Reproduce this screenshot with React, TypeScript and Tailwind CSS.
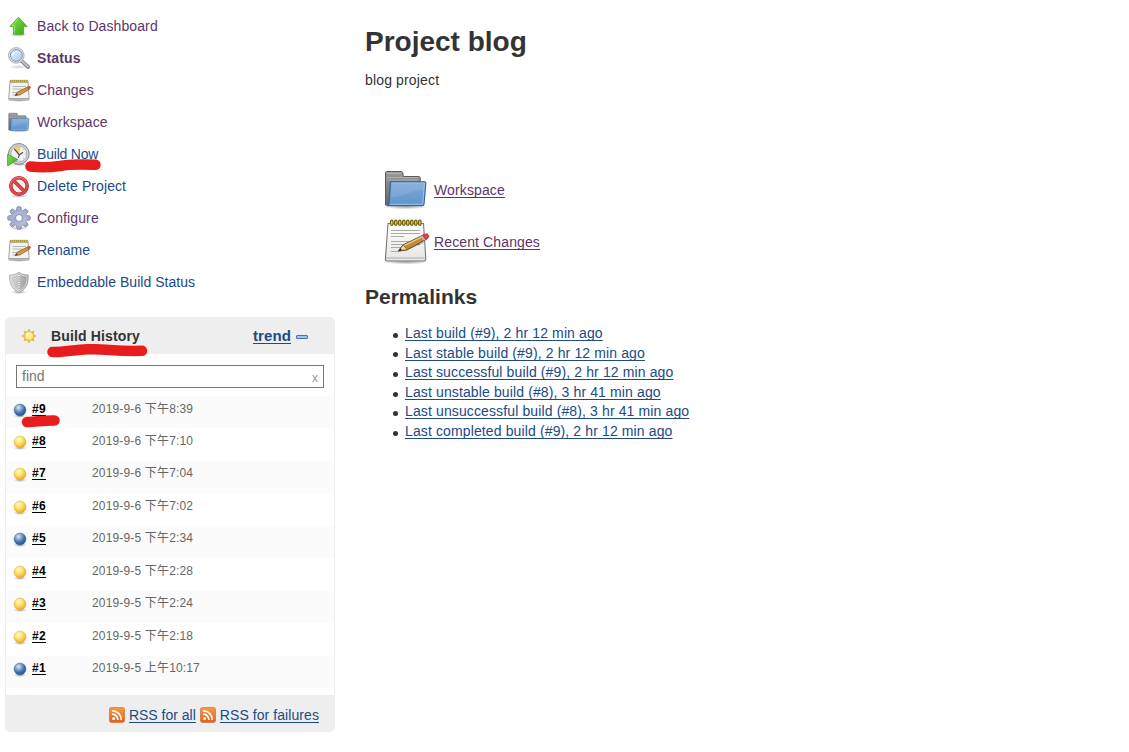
import React from 'react';

const link = 'underline decoration-1 underline-offset-[1.5px] [text-decoration-skip-ink:none]';

function Defs() {
  return (
    <svg className="absolute h-0 w-0" aria-hidden="true">
      <defs>
        <linearGradient id="green" x1="0" y1="0" x2="1" y2="1">
          <stop offset="0" stopColor="#8be05a" />
          <stop offset="1" stopColor="#2fa80a" />
        </linearGradient>
        <linearGradient id="grayFolder" x1="0" y1="0" x2="0" y2="1">
          <stop offset="0" stopColor="#9a9a9a" />
          <stop offset="1" stopColor="#666" />
        </linearGradient>
        <linearGradient id="blueFolder" x1="0" y1="0" x2="0" y2="1">
          <stop offset="0" stopColor="#7fa9d8" />
          <stop offset="1" stopColor="#6193cd" />
        </linearGradient>
        <linearGradient id="paper" x1="0" y1="0" x2="0" y2="1">
          <stop offset="0" stopColor="#fff" />
          <stop offset="1" stopColor="#e6e6e4" />
        </linearGradient>
        <linearGradient id="lens" x1="0" y1="0" x2="1" y2="1">
          <stop offset="0" stopColor="#eaf3ff" />
          <stop offset="1" stopColor="#a5c8f0" />
        </linearGradient>
        <linearGradient id="gearFill" x1="0" y1="0" x2="1" y2="1">
          <stop offset="0" stopColor="#8e96bd" />
          <stop offset="1" stopColor="#c0c7e0" />
        </linearGradient>
        <linearGradient id="shieldFill" x1="0" y1="0" x2="1" y2="0">
          <stop offset="0" stopColor="#d4d4d2" />
          <stop offset="0.5" stopColor="#c4c4c2" />
          <stop offset="0.51" stopColor="#bcbcba" />
          <stop offset="1" stopColor="#999997" />
        </linearGradient>
        <linearGradient id="rss" x1="0" y1="0" x2="0" y2="1">
          <stop offset="0" stopColor="#f79b45" />
          <stop offset="1" stopColor="#de5f20" />
        </linearGradient>
        <radialGradient id="ballBlue" cx="0.38" cy="0.3" r="0.7">
          <stop offset="0" stopColor="#dfe9ef" />
          <stop offset="0.35" stopColor="#86a9cd" />
          <stop offset="0.7" stopColor="#3b6cab" />
          <stop offset="1" stopColor="#2c5790" />
        </radialGradient>
        <radialGradient id="ballYellow" cx="0.4" cy="0.32" r="0.7">
          <stop offset="0" stopColor="#fffbd2" />
          <stop offset="0.45" stopColor="#fbe36a" />
          <stop offset="0.75" stopColor="#fbbd38" />
          <stop offset="1" stopColor="#e6a52a" />
        </radialGradient>
        <radialGradient id="sunFill" cx="0.4" cy="0.35" r="0.7">
          <stop offset="0" stopColor="#fffbd0" />
          <stop offset="1" stopColor="#fde250" />
        </radialGradient>
        <radialGradient id="shade">
          <stop offset="0" stopColor="#000" stopOpacity="0.35" />
          <stop offset="1" stopColor="#000" stopOpacity="0" />
        </radialGradient>
      </defs>
    </svg>
  );
}

const Up = () => (
  <svg className="size-6" viewBox="0 0 24 24">
    <ellipse cx="11.5" cy="20.6" rx="9.5" ry="2.2" fill="url(#shade)" />
    <path d="M11.5 3.2 20.2 12.6h-3.700v7.700H6.500v-7.700H2.800z" fill="url(#green)" stroke="#55b02c" strokeWidth=".9" strokeLinejoin="round" />
    <path d="M11.500 4.800 5.200 11.700H7.600v7.600" fill="none" stroke="#b4ee92" strokeWidth=".7" />
  </svg>
);

const Magnifier = () => (
  <svg className="size-6" viewBox="0 0 24 24">
    <ellipse cx="11" cy="21" rx="10" ry="2.2" fill="url(#shade)" opacity=".5" />
    <path d="m14.500 14.800 6.600 6.200" stroke="#8d8d8d" strokeWidth="3.900" strokeLinecap="round" />
    <path d="m15 15 5.800 5.500" stroke="#bdbdbd" strokeWidth="2.200" strokeLinecap="round" />
    <circle cx="9.300" cy="9.400" r="7.800" fill="#e2e2e2" stroke="#a5a8a8" strokeWidth=".9" />
    <circle cx="9.300" cy="9.400" r="5.900" fill="url(#lens)" stroke="#6f95c8" strokeWidth="1" />
    <path d="M5.700 9.500a3.700 3.700 0 0 1 4-3.700" fill="none" stroke="#fff" strokeWidth="1.300" />
  </svg>
);

function Pencil() {
  return (
    <>
      <path d="m18 35 23-11 1 2-19 8z" fill="#000" opacity=".22" />
      <path d="m16.500 33.800 4.700-6 20.600-10 3.400 4-20 11z" fill="#c28b36" stroke="#68471d" strokeWidth="1" strokeLinejoin="round" />
      <path d="m22 28.700 18.500-9" stroke="#edc77d" strokeWidth="1.500" />
      <path d="m16.500 33.800 4.700-6 4 5z" fill="#efd4a5" stroke="#68471d" strokeWidth=".7" />
      <path d="m16.300 34 2.100-2.700 1.500 1.800z" fill="#222" />
      <path d="m38.400 19.500 2.700-1.300 3.400 4-2.700 1.400z" fill="#bbb" />
      <path d="m40.800 18.200 3-1.300c2.400-.7 4.300 2.800 2.200 4l-2.600 1.500z" fill="#ed4036" stroke="#a82b26" strokeWidth=".7" />
    </>
  );
}

const NotepadLarge = () => (
  <svg className="size-12 shrink-0" viewBox="0 0 48 48">
    <ellipse cx="24" cy="45" rx="23" ry="2.500" fill="url(#shade)" />
    <path d="M6 6.500h35.500l2.300 35.300c.1 1.500-.6 2.200-2 2.200H5.300c-1.400 0-2-.7-1.900-2.100z" fill="url(#paper)" stroke="#777" strokeWidth="1.100" />
    <path d="M3.800 41h40" stroke="#aaa" strokeWidth="1" />
    <path d="M9 13.500h29M9 16.500h29M9 19.500h13M9 24.500h28M9 27.500h29M9 30.500h10M9 34.500h10" stroke="#a9abab" strokeWidth="1" />
    {[9, 13, 17, 21, 25, 29, 33, 37].map((x) => (
      <ellipse key={x} cx={x + 0.8} cy="5.800" rx="1.300" ry="2.700" fill="#f1dc55" stroke="#6f620f" strokeWidth="1.200" />
    ))}
    <Pencil />
  </svg>
);

const Notepad = () => (
  <svg className="size-6" viewBox="0 0 48 48">
    <ellipse cx="24" cy="45" rx="23" ry="2.800" fill="url(#shade)" />
    <path d="M6 6h36l2.300 35.800c.1 1.500-.6 2.200-2 2.200H5.300c-1.400 0-2-.7-1.900-2.100z" fill="#f2f2f1" stroke="#a5a5a5" strokeWidth="2" />
    <path d="M4 41.500h40" stroke="#9a9a9a" strokeWidth="2.500" />
    <path d="M11 17h27M11 22h20M11 29h16M11 34h6" stroke="#b4b6b6" strokeWidth="2" />
    <path d="M6 6.500h36" stroke="#9d8e35" strokeWidth="5.500" />
    <path d="M7.500 6h34" stroke="#e2cf62" strokeWidth="3.500" strokeDasharray="2 2" />
    <path d="m16 35 5-7 20.500-10 3.500 4.500-20 11.500z" fill="#d39a3c" stroke="#8a6328" strokeWidth="1.600" strokeLinejoin="round" />
    <path d="m16 35 2.800-4 2.500 3z" fill="#333" />
    <path d="m40 18.500 4-2c2.400-.7 4.300 2.800 2.200 4l-3.500 2.200z" fill="#e94a36" stroke="#bd4532" strokeWidth="1" />
  </svg>
);

function Folder({ large = false }: { large?: boolean }) {
  return (
    <svg className={large ? 'size-12 shrink-0' : 'size-6'} viewBox="0 0 48 48">
      <ellipse cx="24" cy="41.800" rx="23" ry="2.600" fill="url(#shade)" />
      <path d="M3.500 40V8c0-.9.6-1.500 1.500-1.500h14.200c.8 0 1.500.6 1.600 1.400l.5 3.600h15.500c.8 0 1.400.6 1.400 1.400V40z" fill="url(#grayFolder)" stroke="#5c5c5c" />
      <path d="M5 8.500h14M5 12.500h31M5 15h31" stroke="#bbb" strokeWidth=".7" />
      <path d="M8.500 16.800h34.200c.8 0 1.200.4 1.100 1.200L42 39.200c-.1.900-.7 1.500-1.600 1.500H5.800c1.400-1.500 1.200-2.700 1.400-4.500z" fill="url(#blueFolder)" stroke="#3265a4" strokeWidth="1.200" />
      <path d="M9.500 18h33l-1.800 21.300H7.800" fill="none" stroke="#a5c6e8" strokeWidth=".9" />
      <path d="M9.500 18.500h33l-.7 7C30 24 24 32 8.200 32z" fill="#fff" opacity=".1" />
    </svg>
  );
}

const Clock = () => (
  <svg className="size-6" viewBox="0 0 24 24">
    <ellipse cx="13" cy="22.500" rx="10" ry="1.500" fill="url(#shade)" />
    <circle cx="11.800" cy="11.900" r="10.400" fill="#cfcfd9" stroke="#85868f" strokeWidth="1" />
    <circle cx="11.800" cy="11.900" r="8" fill="#f1f1ef" stroke="#a3a4ae" strokeWidth=".8" />
    <path d="m11.800 11.900-5.300-5.300A8 8 0 0 1 13.800 4.500z" fill="#e9cf6a" />
    <path d="m7.300 6.900 5 6 3.700-2.600M12.300 12.900l-1 3" fill="none" stroke="#4a4a4a" strokeWidth="1.200" />
    <path d="M18.800 12h-1M12 18.800v-1M16.800 7.200l-.7.7M16.800 16.800l-.7-.7" stroke="#999" strokeWidth=".8" />
    <path d="M.6 12.200 10.800 17.600.6 24z" fill="url(#green)" stroke="#4f9a30" strokeWidth=".8" />
  </svg>
);

const Stop = () => (
  <svg className="size-6" viewBox="0 0 24 24">
    <ellipse cx="12" cy="22" rx="9" ry="1.800" fill="url(#shade)" />
    <circle cx="12" cy="12" r="8.200" fill="#f0f0f0" stroke="#b9262b" strokeWidth="3.500" />
    <path d="m6.700 6.700 10.600 10.600" stroke="#b9262b" strokeWidth="3.500" />
    <circle cx="12" cy="12" r="8.200" fill="none" stroke="#dc4a4e" strokeWidth="2.200" />
    <path d="m6.500 6.500 11 11" stroke="#dc4a4e" strokeWidth="2.200" />
    <path d="M3.700 9a8.800 8.800 0 0 1 16-1" fill="none" stroke="#f08c8d" strokeWidth=".7" />
  </svg>
);

const teeth = [0, 45, 90, 135, 180, 225, 270, 315];
const Gear = () => (
  <svg className="size-6" viewBox="0 0 24 24">
    <ellipse cx="12" cy="22.300" rx="9" ry="1.700" fill="url(#shade)" />
    {teeth.map((a) => (
      <path key={a} d="M9.300 5.500 10.100 1q1.900-.8 3.800 0l.8 4.500z" transform={`rotate(${a} 12 12)`} fill="#a5acce" stroke="#7f86a8" strokeWidth=".8" />
    ))}
    <circle cx="12" cy="12" r="7.800" fill="url(#gearFill)" />
    <path d="M4.800 14A7.300 7.300 0 0 1 17 6.800C12 7 8 10 4.800 14" fill="#fff" opacity=".18" />
    <circle cx="12" cy="12" r="3.500" fill="#fff" stroke="#7f86a9" strokeWidth=".9" />
  </svg>
);

const Shield = () => (
  <svg className="size-6" viewBox="0 0 24 24">
    <ellipse cx="12" cy="22" rx="8" ry="2" fill="url(#shade)" />
    <path d="M12 2.200C9.600 4 6.500 5 2.700 5c-.4 7.800 1.600 14 9.300 17.800C19.700 19 21.700 12.800 21.300 5 17.500 5 14.400 4 12 2.200z" fill="url(#shieldFill)" stroke="#aaa" strokeWidth=".8" />
    <path d="M12 3.600C9.700 5 7.300 5.900 3.900 6c-.1 7 1.800 12 8.100 15.500C18.300 18 20.200 13 20.100 6 16.700 5.900 14.300 5 12 3.600z" fill="none" stroke="#e6e6e6" strokeWidth=".8" />
    <path d="M12 5v15" stroke="#eee" strokeWidth="2" strokeDasharray="1 1.300" />
    <path d="M12 4v17" stroke="#888" strokeWidth=".7" strokeDasharray="1 1.300" />
  </svg>
);

const Sun = () => (
  <svg className="size-4" viewBox="0 0 16 16">
    {teeth.map((a) => (
      <path key={a} d="M6.600 3.600 8 .8l1.400 2.800z" transform={`rotate(${a} 8 8)`} fill="#f5a93a" stroke="#f5a93a" strokeWidth=".4" />
    ))}
    <circle cx="8" cy="8" r="4.500" fill="url(#sunFill)" stroke="#f3ad40" strokeWidth=".9" />
  </svg>
);

const Rss = () => (
  <svg className="size-4 shrink-0" viewBox="0 0 16 16">
    <rect x=".4" y=".4" width="15.200" height="15.200" rx="2.400" fill="url(#rss)" stroke="#d8743a" strokeWidth=".8" />
    <circle cx="4.600" cy="11.600" r="1.500" fill="#fff" />
    <path d="M3.200 7.200a5.700 5.700 0 0 1 5.700 5.700M3.200 3.800a9.100 9.100 0 0 1 9.100 9.100" fill="none" stroke="#fff" strokeWidth="1.700" />
  </svg>
);

const Ball = ({ blue }: { blue: boolean }) => (
  <svg className="mt-[3px] h-[15px] w-[14px] shrink-0" viewBox="0 0 14 15">
    <ellipse cx="7" cy="13" rx="6.600" ry="2" fill="url(#shade)" />
    <circle cx="7" cy="7" r="6" fill={blue ? 'url(#ballBlue)' : 'url(#ballYellow)'} stroke={blue ? '#42658f' : '#d5ac4c'} strokeWidth=".5" />
  </svg>
);

const tasks = [
  { label: 'Back to Dashboard', icon: <Up />, style: 'tracking-[0.1px] text-[#5c3566]' },
  { label: 'Status', icon: <Magnifier />, style: 'font-bold tracking-[0.15px] text-[#5c3566]' },
  { label: 'Changes', icon: <Notepad />, style: 'tracking-[0.1px] text-[#5c3566]' },
  { label: 'Workspace', icon: <Folder />, style: 'tracking-[0.1px] text-[#5c3566]' },
  { label: 'Build Now', icon: <Clock />, style: 'tracking-[-0.2px] text-[#204a87]' },
  { label: 'Delete Project', icon: <Stop />, style: 'tracking-[0.08px] text-[#204a87]' },
  { label: 'Configure', icon: <Gear />, style: 'tracking-[0.12px] text-[#5c3566]' },
  { label: 'Rename', icon: <Notepad />, style: 'text-[#204a87]' },
  { label: 'Embeddable Build Status', icon: <Shield />, style: 'tracking-[0.04px] text-[#204a87]' },
];

const builds = [
  { id: 9, time: '2019-9-6 下午8:39', blue: true },
  { id: 8, time: '2019-9-6 下午7:10', blue: false },
  { id: 7, time: '2019-9-6 下午7:04', blue: false },
  { id: 6, time: '2019-9-6 下午7:02', blue: false },
  { id: 5, time: '2019-9-5 下午2:34', blue: true },
  { id: 4, time: '2019-9-5 下午2:28', blue: false },
  { id: 3, time: '2019-9-5 下午2:24', blue: false },
  { id: 2, time: '2019-9-5 下午2:18', blue: false },
  { id: 1, time: '2019-9-5 上午10:17', blue: true },
];

const permalinks = [
  'Last build (#9), 2 hr 12 min ago',
  'Last stable build (#9), 2 hr 12 min ago',
  'Last successful build (#9), 2 hr 12 min ago',
  'Last unstable build (#8), 3 hr 41 min ago',
  'Last unsuccessful build (#8), 3 hr 41 min ago',
  'Last completed build (#9), 2 hr 12 min ago',
];

export default function App() {
  return (
    <div className="relative flex h-[752px] w-[1129px] overflow-hidden bg-white font-['Liberation_Sans','Noto_Sans_CJK_SC',sans-serif] text-sm text-[#333]">
      <Defs />
      <aside className="w-[335px] shrink-0 pl-[5px] pt-[14px]">
        <nav className="flex flex-col gap-2 pl-[2px]">
          {tasks.map((t) => (
            <a key={t.label} className={`flex h-6 items-center gap-[6px] ${t.style}`}>
              {t.icon}
              <span>{t.label}</span>
            </a>
          ))}
        </nav>
        <section className="mt-[23px] flex h-[415px] flex-col overflow-hidden rounded-[5px] border border-[#eee]">
          <header className="flex h-9 shrink-0 items-center bg-[#eee] pl-[15px] pr-[26px]">
            <Sun />
            <h2 className="ml-[14px] font-bold tracking-[0.14px]">Build History</h2>
            <a className={`ml-auto text-[15px] font-bold tracking-[0.1px] text-[#204a87] ${link}`}>trend</a>
            <span className="ml-[5px] mt-px h-1 w-3 rounded-[1px] border border-[#4274b3] bg-[#a5c2e2]" />
          </header>
          <div className="mx-[10px] mt-[11px] flex h-[23px] shrink-0 items-center justify-between border border-[#767676] pl-[5px] pr-[5px] text-[#757575]">
            <span className="pb-[2px]">find</span>
            <span className="pt-[2px] text-xs text-[#999]">x</span>
          </div>
          <div className="mt-2 flex h-[292px] shrink-0 flex-col">
            {builds.map((b) => (
              <div key={b.id} className="flex flex-1 items-start pl-[7px] pt-[3.5px] text-xs odd:bg-[#fbfbfb]">
                <Ball blue={b.blue} />
                <a className={`ml-[5px] w-[60px] font-bold leading-[18px] tracking-[0.3px] text-black ${link}`}>#{b.id}</a>
                <span className="leading-[18px] tracking-[0.16px] text-[#666]">{b.time}</span>
              </div>
            ))}
          </div>
          <footer className="mt-auto flex h-[36px] shrink-0 items-center justify-end gap-1 bg-[#eee] pr-[15px] pt-[3px] text-[#204a87]">
            <Rss />
            <a className={link}>RSS for all</a>
            <Rss />
            <a className={`tracking-[0.07px] ${link}`}>RSS for failures</a>
          </footer>
        </section>
      </aside>
      <main className="pl-[30px] pt-[26px]">
        <h1 className="text-[28px] font-bold leading-8">Project blog</h1>
        <p className="mt-3 leading-5 tracking-[0.15px]">blog project</p>
        <div className="mt-[75px] flex flex-col gap-1 pl-[17px] tracking-[0.12px] text-[#5c3566]">
          <a className="flex items-center gap-1">
            <Folder large />
            <span className={`pt-[2px] ${link}`}>Workspace</span>
          </a>
          <a className="flex items-center gap-1">
            <NotepadLarge />
            <span className={`pt-[2px] ${link}`}>Recent Changes</span>
          </a>
        </div>
        <h2 className="mt-5 text-[21px] font-bold leading-6">Permalinks</h2>
        <ul className="mt-[15px] pl-[28px] leading-[19.600px] tracking-[0.125px]">
          {permalinks.map((p) => (
            <li key={p} className="flex items-center gap-[7px]">
              <span className="mt-[3px] size-[5px] rounded-full bg-[#333]" />
              <a className={`text-[#204a87] ${link}`}>{p}</a>
            </li>
          ))}
        </ul>
      </main>
      <svg className="pointer-events-none absolute left-0 top-0 h-[440px] w-[160px]" viewBox="0 0 160 440" fill="none" stroke="#e81c1c" strokeLinecap="round" strokeLinejoin="round">
        <path d="M30.500 166.500C42 168 51 167.200 60 166c10-2.200 22-1.800 35.500-1.200" strokeWidth="10.500" />
        <path d="M52.500 352C63 352.500 74 349.700 88 349.300c20-.8 23 2.200 54 1.500" strokeWidth="10.500" />
        <path d="M27 422C36 422 43 420.300 54.500 420.500" strokeWidth="10.500" />
      </svg>
    </div>
  );
}
